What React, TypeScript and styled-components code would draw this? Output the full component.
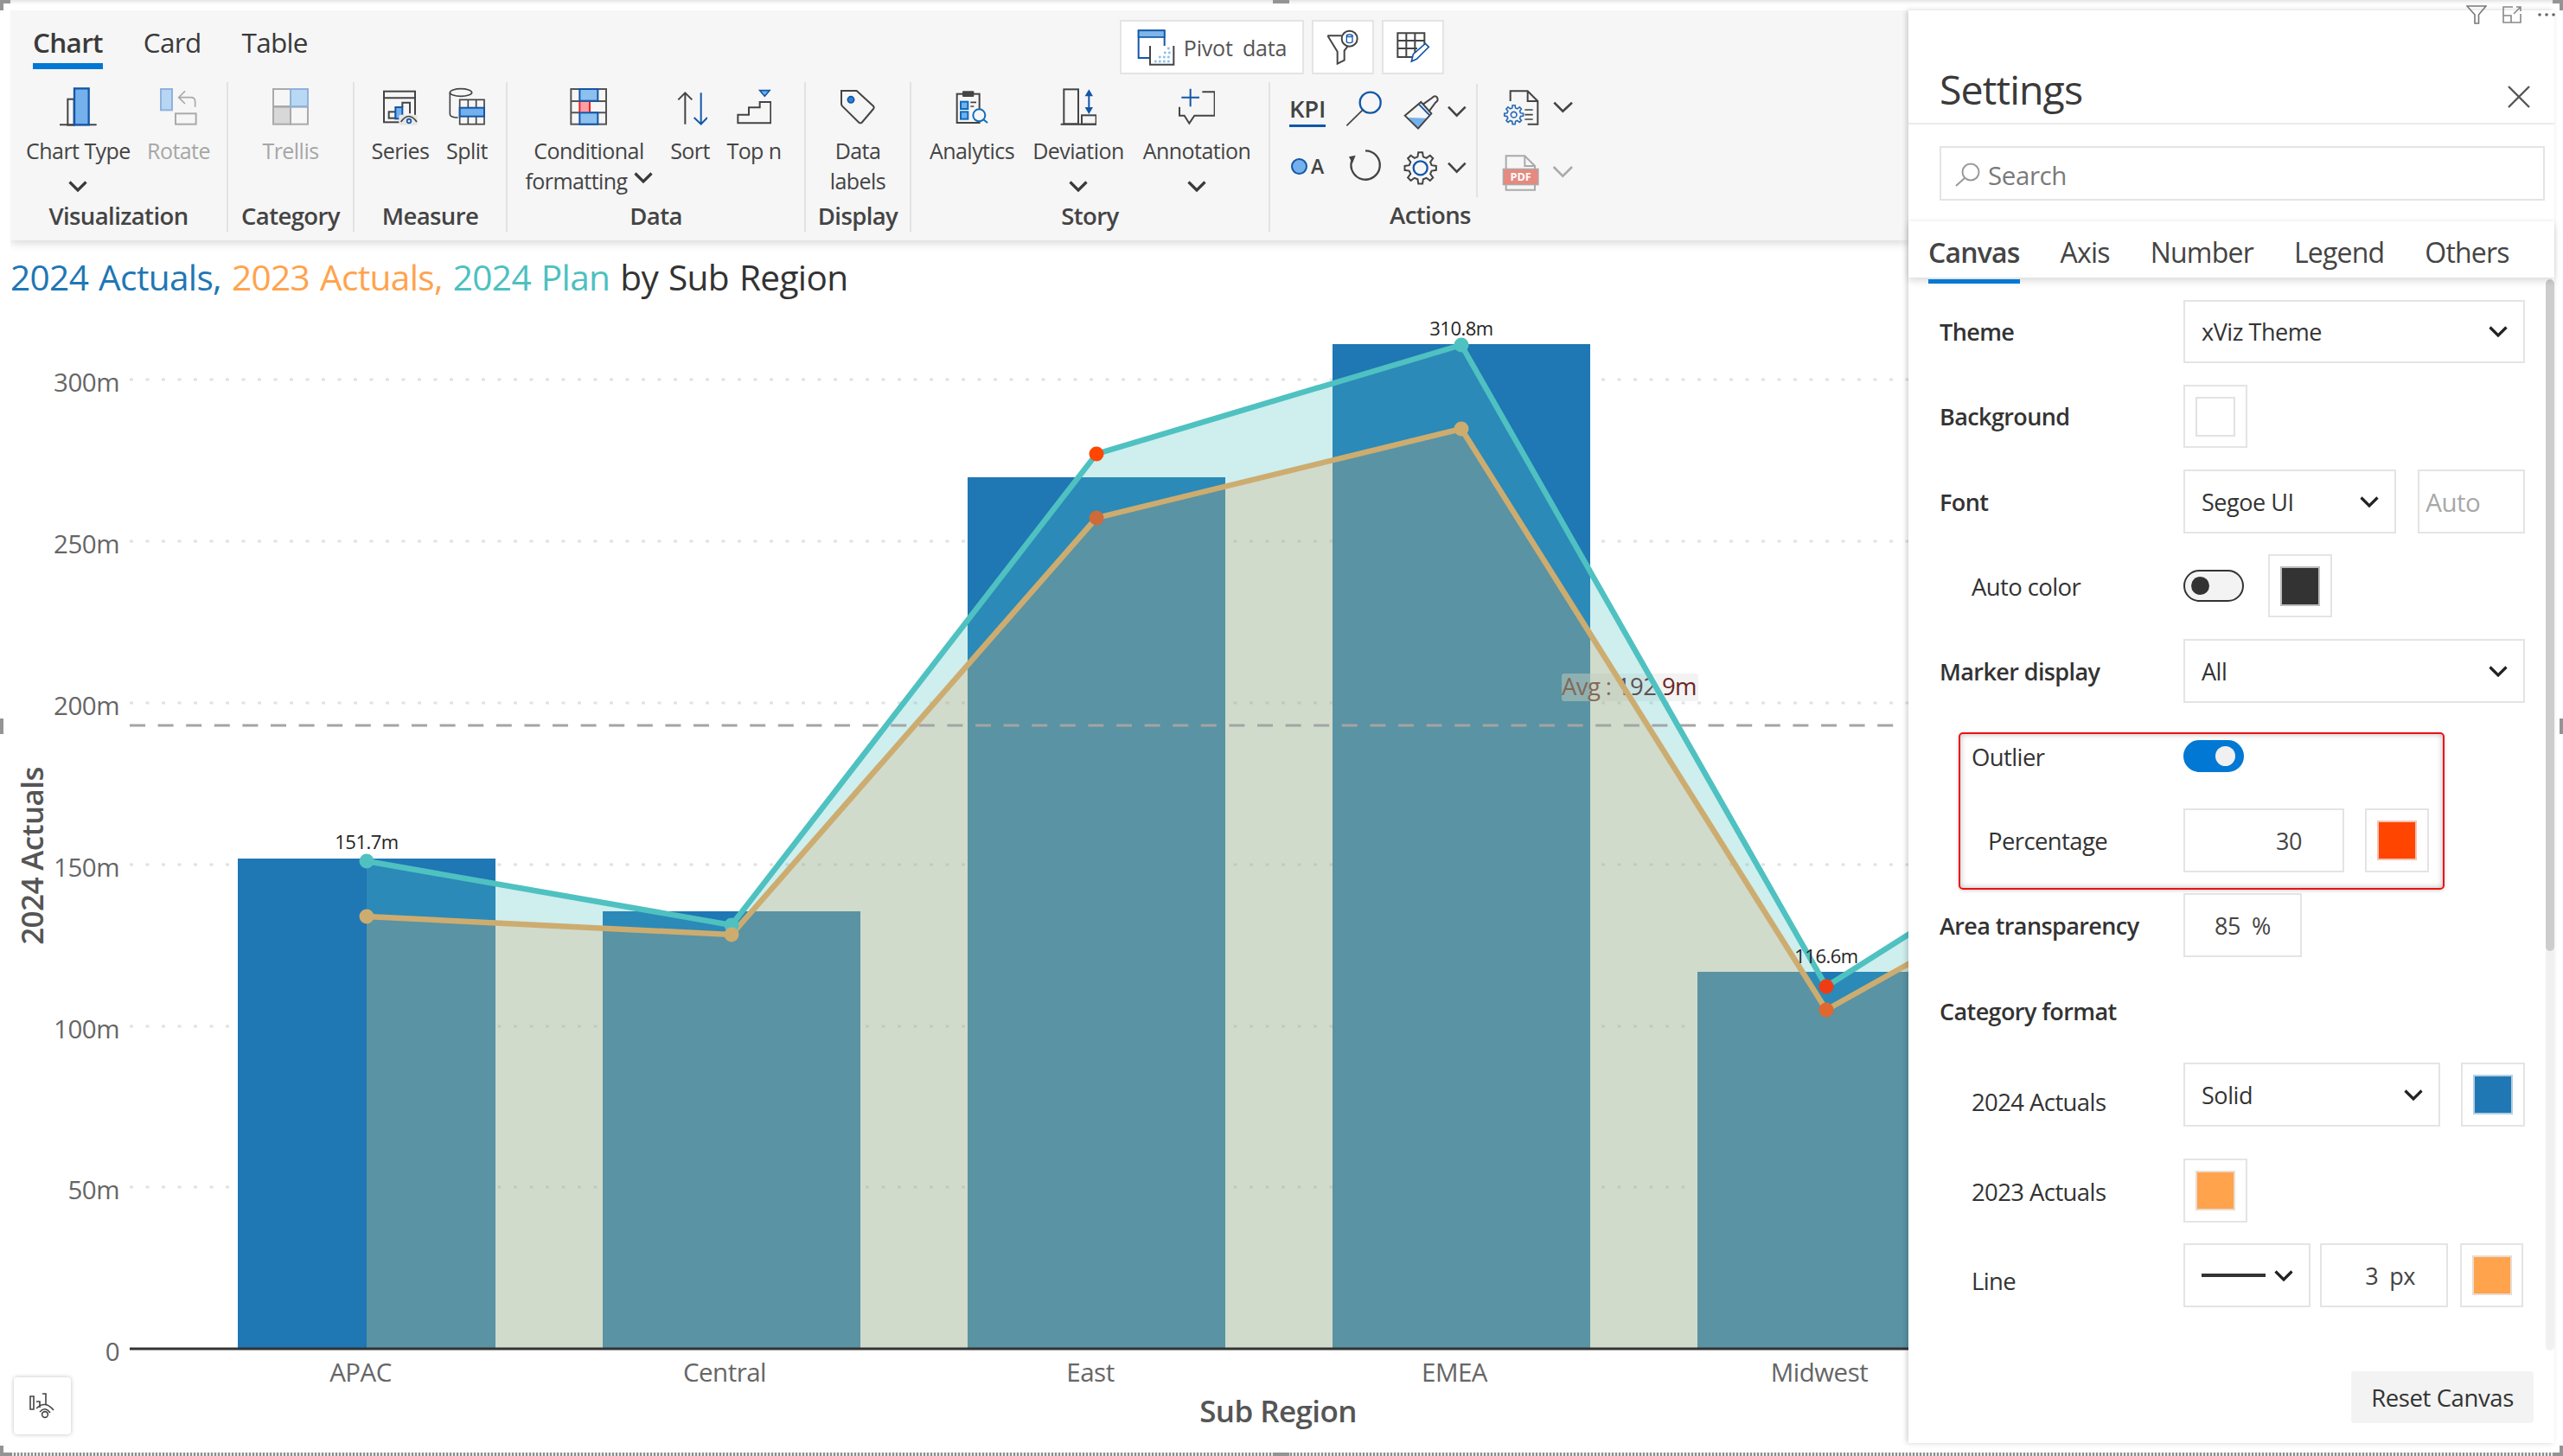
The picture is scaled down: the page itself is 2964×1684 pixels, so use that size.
import React from "react";
import styled, { createGlobalStyle } from "styled-components";

const D = "#444";
const B = "#1257a8";
const F = "#74b0ec";
const FONT = `"Open Sans", "Noto Sans", sans-serif`;

const Global = createGlobalStyle`
  html, body { margin: 0; padding: 0; background: #fff; }
  body { font-family: ${FONT}; color: #333; }
  #root { width: 2964px; height: 1684px; overflow: hidden; }
`;

const Page = styled.div`
  position: relative;
  width: 2964px;
  height: 1684px;
  display: flex;
  flex-direction: column;
  overflow: hidden;
  background: #fff;
  border-top: 0;
`;
const TopEdge = styled.div`
  height: 12px;
  flex: none;
  background: linear-gradient(#e4e4e4 0, #f6f6f6 3px, #fff 6px);
`;
const Frame = styled.div`
  flex: 1;
  min-height: 0;
  display: flex;
  padding: 0 10px 0 12px;
`;
const BottomDash = styled.div`
  height: 4px;
  flex: none;
  background: repeating-linear-gradient(90deg, #8e8e8e 0 2px, #e8e8e8 2px 4px);
`;
const Handle = styled.div<{ $x: number; $y: number; $w: number; $h: number }>`
  position: absolute;
  left: ${(p) => p.$x}px;
  top: ${(p) => p.$y}px;
  width: ${(p) => p.$w}px;
  height: ${(p) => p.$h}px;
  background: #949494;
`;
const Main = styled.div`
  width: 2195px;
  flex: none;
  position: relative;
  display: flex;
  flex-direction: column;
  overflow: hidden;
`;
const Ribbon = styled.div`
  height: 266px;
  flex: none;
  background: #f6f6f6;
  box-shadow: 0 3px 10px rgba(0, 0, 0, 0.16);
  display: flex;
  flex-direction: column;
  position: relative;
  margin-bottom: 12px;
`;
const RibbonTop = styled.div`
  height: 83px;
  flex: none;
  display: flex;
  align-items: flex-start;
`;
const RibbonTabs = styled.div`
  display: flex;
  gap: 47px;
  padding-left: 26px;
  width: 1283px;
  box-sizing: border-box;
`;
const RibbonTab = styled.div<{ $active?: boolean }>`
  font-size: 31.5px;
  letter-spacing: -0.7px;
  height: 68px;
  line-height: 49px;
  padding-top: 12px;
  box-sizing: border-box;
  color: #3a3a3a;
  font-weight: ${(p) => (p.$active ? 600 : 400)};
  border-bottom: ${(p) => (p.$active ? "7px solid #0078d4" : "7px solid transparent")};
`;
const PivotBar = styled.div`
  display: flex;
  gap: 9px;
  margin-top: 11px;
`;
const PivotButton = styled.div<{ $w: number }>`
  width: ${(p) => p.$w}px;
  height: 63px;
  box-sizing: border-box;
  background: #fff;
  border: 2px solid #e4e4e4;
  display: flex;
  align-items: center;
  justify-content: center;
  gap: 9px;
  font-size: 25px;
  color: #555;
  word-spacing: 5px;
  letter-spacing: -0.2px;
`;
const Groups = styled.div`
  flex: 1;
  display: flex;
  align-items: flex-start;
`;
const Group = styled.div<{ $w: number; $noSep?: boolean }>`
  width: ${(p) => p.$w}px;
  height: 173px;
  box-sizing: border-box;
  border-right: ${(p) => (p.$noSep ? "0" : "2px solid #e2e2e2")};
  display: flex;
  flex-direction: column;
  position: relative;
`;
const GroupItems = styled.div<{ $pl?: number; $center?: boolean }>`
  height: 137px;
  display: flex;
  padding-left: ${(p) => p.$pl ?? 0}px;
  justify-content: ${(p) => (p.$center ? "center" : "flex-start")};
`;
const GroupLabel = styled.div<{ $mt?: number }>`
  text-align: center;
  font-size: 27.5px;
  font-weight: 600;
  letter-spacing: -0.6px;
  color: #444;
  line-height: 36px;
  margin-top: ${(p) => p.$mt ?? 2}px;
`;
const Item = styled.div<{ $w: number; $dim?: boolean }>`
  width: ${(p) => p.$w}px;
  display: flex;
  flex-direction: column;
  align-items: center;
  color: ${(p) => (p.$dim ? "#a6a6a6" : "#444")};
  font-size: 25px;
  letter-spacing: -0.55px;
  line-height: 35px;
  text-align: center;
`;
const IconSlot = styled.div`
  height: 54px;
  display: flex;
  justify-content: center;
  margin-bottom: 8px;
`;
const ItemLabel = styled.div`
  white-space: nowrap;
  height: 35px;
  display: flex;
  align-items: center;
  gap: 7px;
`;
const ChevronRow = styled.div`
  height: 35px;
  display: flex;
  align-items: center;
  justify-content: center;
  padding-top: 11px;
  box-sizing: border-box;
`;
const InlineChev = styled.span`
  display: flex;
  margin-bottom: 8px;
`;
const ActionsBody = styled.div`
  height: 130px;
  margin-top: -1px;
  padding-left: 10px;
  display: grid;
  grid-template-columns: 66px 66px 60px 28px 17px 80px 24px;
  grid-template-rows: 64px 66px;
`;
const Cell = styled.div`
  display: flex;
  align-items: center;
  justify-content: center;
`;
const InnerSep = styled.div`
  grid-row: 1 / span 2;
  grid-column: 5;
  margin-top: 3px;
  width: 2px;
  height: 131px;
  background: #e2e2e2;
  justify-self: center;
`;
const Kpi = styled.div`
  font-size: 27.5px;
  font-weight: 600;
  color: #444;
  line-height: 30px;
  letter-spacing: -0.2px;
  padding-bottom: 3px;
  border-bottom: 3px solid ${B};
  margin-top: 6px;
  width: 42px;
  display: flex;
  justify-content: center;
`;
const DotA = styled.div`
  display: flex;
  align-items: center;
  gap: 4px;
  font-size: 23px;
  font-weight: 600;
  color: #444;
  margin-top: 2px;
  &::before {
    content: "";
    width: 15px;
    height: 15px;
    border-radius: 50%;
    background: ${F};
    border: 2px solid ${B};
  }
`;
const Title = styled.div`
  height: 50px;
  flex: none;
  font-size: 40.6px;
  line-height: 62px;
  letter-spacing: -0.65px;
  word-spacing: 2px;
  white-space: nowrap;
  color: #333;
`;
const TitleSpan = styled.span<{ $c: string }>`
  color: ${(p) => p.$c};
`;
const ChartSvg = styled.svg`
  flex: none;
  display: block;
  font-family: ${FONT};
`;
const FloatButton = styled.div`
  position: absolute;
  left: 4px;
  top: 1581px;
  width: 66px;
  height: 66px;
  background: #fff;
  border-radius: 4px;
  box-shadow: 0 0 5px rgba(0, 0, 0, 0.25);
  display: flex;
  align-items: center;
  justify-content: center;
`;

const Panel = styled.div`
  width: 747px;
  flex: none;
  height: 1657px;
  background: #fff;
  display: flex;
  flex-direction: column;
  box-shadow: -2px 0 6px rgba(0, 0, 0, 0.18);
  position: relative;
`;
const PanelHeader = styled.div`
  height: 132px;
  box-sizing: border-box;
  flex: none;
  border-bottom: 2px solid #ececec;
  display: flex;
  align-items: flex-start;
  justify-content: space-between;
  padding: 64px 28px 0 36px;
`;
const PanelTitle = styled.div`
  font-size: 46.5px;
  line-height: 54px;
  letter-spacing: -0.9px;
  color: #3a3a3a;
`;
const CloseIcon = styled.svg`
  margin-top: 23px;
`;
const SearchWrap = styled.div`
  height: 112px;
  flex: none;
  padding: 25px 11px 0 36px;
  box-sizing: border-box;
`;
const SearchBox = styled.div`
  height: 63px;
  box-sizing: border-box;
  border: 2px solid #e4e4e4;
  display: flex;
  align-items: center;
  padding: 3px 0 0 15px;
  gap: 9px;
  font-size: 29.5px;
  letter-spacing: -0.4px;
  color: #7a7a7a;
`;
const PanelTabs = styled.div`
  height: 65px;
  flex: none;
  display: flex;
  gap: 47px;
  padding-left: 23px;
  position: relative;
  z-index: 2;
  background: #fff;
  box-shadow: 0 4px 8px rgba(0, 0, 0, 0.14), 0 -2px 3px rgba(0, 0, 0, 0.03);
`;
const PanelTab = styled.div<{ $active?: boolean }>`
  position: relative;
  font-size: 32px;
  letter-spacing: -0.8px;
  line-height: 72px;
  color: #444;
  font-weight: ${(p) => (p.$active ? 600 : 400)};
  &::after {
    content: "";
    display: ${(p) => (p.$active ? "block" : "none")};
    position: absolute;
    left: 0;
    right: 0;
    bottom: -7px;
    height: 5px;
    background: #0078d4;
  }
`;
const PanelBody = styled.div`
  height: 1241px;
  flex: none;
  display: flex;
  justify-content: space-between;
`;
const Form = styled.div`
  padding: 26px 0 0 36px;
  flex: 1;
`;
const Scrollbar = styled.div`
  width: 10px;
  flex: none;
  margin-top: 2px;
  background: #f1f1f1;
  border-radius: 5px;
  overflow: hidden;
`;
const ScrollThumb = styled.div`
  height: 777px;
  background: #cdcdcd;
  border-radius: 5px;
`;
const Row = styled.div<{ $mt?: number; $h?: number }>`
  display: grid;
  grid-template-columns: 282px auto;
  align-items: center;
  height: ${(p) => p.$h ?? 73}px;
  margin-top: ${(p) => p.$mt ?? 0}px;
`;
const Label = styled.div<{ $bold?: boolean; $indent?: number; $dy?: number }>`
  font-size: ${(p) => (p.$bold ? 27 : 27.5)}px;
  font-weight: ${(p) => (p.$bold ? 600 : 400)};
  letter-spacing: -0.6px;
  color: #333;
  padding-left: ${(p) => p.$indent ?? 0}px;
  padding-top: ${(p) => (p.$dy ?? 0) * 2}px;
  white-space: nowrap;
`;
const Controls = styled.div<{ $gap?: number }>`
  display: flex;
  align-items: center;
  gap: ${(p) => p.$gap ?? 25}px;
`;
const Field = styled.div<{ $w: number; $h?: number; $ml?: number }>`
  width: ${(p) => p.$w}px;
  height: ${(p) => p.$h ?? 73}px;
  margin-left: ${(p) => p.$ml ?? 0}px;
  box-sizing: border-box;
  border: 2px solid #e4e4e4;
  background: #fff;
  font-size: 27px;
  letter-spacing: -0.45px;
  color: #333;
`;
const SelectField = styled(Field)`
  display: flex;
  align-items: center;
  justify-content: space-between;
  padding: 0 18px 0 19px;
`;
const InputField = styled(Field)<{ $align?: string; $pr?: number; $muted?: boolean }>`
  display: flex;
  align-items: center;
  justify-content: ${(p) => p.$align ?? "center"};
  padding-right: ${(p) => p.$pr ?? 0}px;
  white-space: pre;
  color: ${(p) => (p.$muted ? "#a8a8a8" : "#444")};
  font-size: ${(p) => (p.$muted ? 29.5 : 27)}px;
`;
const SwatchBox = styled(Field)`
  display: flex;
  align-items: center;
  justify-content: center;
`;
const SwatchFill = styled.div<{ $c: string; $b: string }>`
  width: 46px;
  height: 46px;
  box-sizing: border-box;
  background: ${(p) => p.$c};
  border: 2px solid ${(p) => p.$b};
`;
const Toggle = styled.div<{ $on?: boolean }>`
  position: relative;
  width: 70px;
  height: 37px;
  box-sizing: border-box;
  border-radius: 19px;
  background: ${(p) => (p.$on ? "#0078d4" : "#f3f3f3")};
  border: 2px solid ${(p) => (p.$on ? "#0078d4" : "#333")};
  &::after {
    content: "";
    position: absolute;
    top: ${(p) => (p.$on ? "5px" : "6px")};
    left: ${(p) => (p.$on ? "35px" : "7px")};
    width: ${(p) => (p.$on ? "23px" : "21px")};
    height: ${(p) => (p.$on ? "23px" : "21px")};
    border-radius: 50%;
    background: ${(p) => (p.$on ? "#f0f0f0" : "#333")};
  }
`;
const HighlightBox = styled.div`
  margin: 34px 0 0 22px;
  width: 562px;
  height: 182px;
  box-sizing: border-box;
  border: 2px solid #f01010;
  border-radius: 5px;
  padding: 6px 0 0 13px;
  box-shadow: inset 0 0 7px rgba(0, 0, 0, 0.28), 0 1px 4px rgba(0, 0, 0, 0.18);
`;
const HighlightRow = styled.div<{ $mt?: number; $h: number }>`
  display: grid;
  grid-template-columns: 245px auto;
  align-items: center;
  height: ${(p) => p.$h}px;
  margin-top: ${(p) => p.$mt ?? 0}px;
`;
const LineSample = styled.div`
  width: 74px;
  height: 4px;
  background: #333;
`;
const PanelFooter = styled.div`
  flex: 1;
  display: flex;
  justify-content: flex-end;
  padding: 24px 24px 0 0;
`;
const ResetButton = styled.div`
  width: 211px;
  height: 60px;
  background: #f3f3f3;
  border-radius: 4px;
  display: flex;
  align-items: center;
  justify-content: center;
  font-size: 27.5px;
  letter-spacing: -0.4px;
  color: #333;
`;
const VisualHeader = styled.div`
  position: absolute;
  top: 6px;
  right: 8px;
  display: flex;
  align-items: center;
  gap: 18px;
  z-index: 3;
`;

/* icon drawn in the coordinates of a 3x crop */
const Ico = ({
  x,
  w,
  y = 9,
  h = 162,
  children,
}: {
  x: number;
  w: number;
  y?: number;
  h?: number;
  children: React.ReactNode;
}) => (
  <svg width={w / 3} height={h / 3} viewBox={`${x} ${y} ${w} ${h}`} fill="none">
    {children}
  </svg>
);

const Chevron = ({ c = "#3a3a3a" }: { c?: string }) => (
  <svg width="22" height="13" viewBox="0 0 22 13" fill="none">
    <path d="M1.5 1.5 L11 11 L20.5 1.5" stroke={c} strokeWidth="3.2" />
  </svg>
);

const gearPath = (cx: number, cy: number, ro: number, ri: number, n: number) => {
  const pts: string[] = [];
  for (let i = 0; i < n; i++) {
    const a = (i / n) * Math.PI * 2;
    const s = Math.PI / n;
    const at = (r: number, t: number) =>
      `${(cx + r * Math.cos(t)).toFixed(1)} ${(cy + r * Math.sin(t)).toFixed(1)}`;
    pts.push(at(ri, a - s * 0.62), at(ro, a - s * 0.34), at(ro, a + s * 0.34), at(ri, a + s * 0.62));
  }
  return "M" + pts.join(" L") + " Z";
};

const bars = [
  { x: 275, top: 993 },
  { x: 697, top: 1054 },
  { x: 1119, top: 552 },
  { x: 1541, top: 398 },
  { x: 1963, top: 1124 },
];
const xs = [424, 846, 1268, 1690, 2112, 2534];
const teal = [996, 1070, 525, 399, 1141, 874];
const tan = [1060, 1081, 599, 496, 1168, 932];
const gridY = [439, 626, 813, 1000, 1187, 1373];
const ticks = [
  ["300m", 439],
  ["250m", 626],
  ["200m", 813],
  ["150m", 1000],
  ["100m", 1187],
  ["50m", 1373],
  ["0", 1560],
] as const;
const cats = [
  ["APAC", 417],
  ["Central", 838],
  ["East", 1261],
  ["EMEA", 1682],
  ["Midwest", 2104],
] as const;
const pts = (ys: number[]) => xs.map((x, i) => `${x},${ys[i]}`).join(" ");
const area = (ys: number[]) => `424,1560 ${pts(ys)} 2534,1560`;

const Chart = () => (
  <ChartSvg width="2195" height="1340" viewBox="12 340 2195 1340">
    {gridY.map((y) => (
      <line key={y} x1="150" x2="2207" y1={y} y2={y} stroke="#e2e2e2" strokeWidth="3" strokeDasharray="4 14.5" />
    ))}
    {bars.map((b) => (
      <rect key={b.x} x={b.x} y={b.top} width="298" height={1560 - b.top} fill="#1f77b4" />
    ))}
    <rect x="1806" y="779" width="158" height="32" rx="3" fill="rgba(232,232,232,0.5)" />
    <text x="1806" y="804" fontSize="27.5" letterSpacing="-0.6" fill="#6b2626">
      Avg : 192.9m
    </text>
    <polygon points={area(teal)} fill="rgba(77,192,192,0.27)" />
    <polygon points={area(tan)} fill="rgba(211,171,112,0.283)" />
    <line x1="150" x2="2196" y1="839" y2="839" stroke="#a4a4a4" strokeWidth="3" strokeDasharray="18 14.6" />
    <polyline points={pts(teal)} fill="none" stroke="#4fc1c1" strokeWidth="6.5" />
    <polyline points={pts(tan)} fill="none" stroke="#cdac70" strokeWidth="6.5" />
    {xs.slice(0, 5).map((x, i) => (
      <circle key={x} cx={x} cy={teal[i]} r="8.5" fill={i === 2 ? "#ff4500" : i === 4 ? "#f03c14" : "#4fc1c1"} />
    ))}
    {xs.slice(0, 5).map((x, i) => (
      <circle key={x} cx={x} cy={tan[i]} r="8.5" fill={i === 2 ? "#cd6b3a" : i === 4 ? "#e0672d" : "#cdac70"} />
    ))}
    <line x1="150" x2="2207" y1="1560" y2="1560" stroke="#333" strokeWidth="3" />
    {ticks.map(([t, y]) => (
      <text key={t} x="138" y={y + 14} textAnchor="end" fontSize="29.5" letterSpacing="-0.5" fill="#666">
        {t}
      </text>
    ))}
    {cats.map(([t, x]) => (
      <text key={t} x={x} y="1598" textAnchor="middle" fontSize="29.5" letterSpacing="-0.5" fill="#666">
        {t}
      </text>
    ))}
    <text x="1478" y="1645" textAnchor="middle" fontSize="35" fontWeight="600" letterSpacing="-0.6" fill="#555">
      Sub Region
    </text>
    <text
      transform="translate(50 990) rotate(-90)"
      textAnchor="middle"
      fontSize="35"
      fontWeight="600"
      letterSpacing="-0.6"
      fill="#555"
    >
      2024 Actuals
    </text>
    {(
      [
        ["151.7m", 424, 982],
        ["310.8m", 1690, 388],
        ["116.6m", 2112, 1114],
      ] as const
    ).map(([t, x, y]) => (
      <text key={t} x={x} y={y} textAnchor="middle" fontSize="22" letterSpacing="-0.5" fill="#252423">
        {t}
      </text>
    ))}
  </ChartSvg>
);

const RibbonGroups = () => (
  <Groups>
    <Group $w={252}>
      <GroupItems $pl={18}>
        <Item $w={122}>
          <IconSlot>
            <Ico x={148} w={128}>
              <path d="M148 157 H276" stroke={D} strokeWidth="6" />
              <rect x="176" y="68" width="22" height="90" stroke={D} strokeWidth="6" />
              <rect x="199" y="31" width="50" height="126" fill={F} stroke={B} strokeWidth="7" />
            </Ico>
          </IconSlot>
          <ItemLabel>Chart Type</ItemLabel>
          <ChevronRow>
            <Chevron />
          </ChevronRow>
        </Item>
        <Item $w={112} $dim>
          <IconSlot>
            <Ico x={498} w={130}>
              <rect x="501" y="33" width="39" height="73" fill="#b7d6f3" stroke="#8fb2dc" strokeWidth="6" />
              <path d="M585 40 L563 62 L585 84 M565 62 H605 Q620 62 620 77 V95" stroke="#aaa" strokeWidth="5" />
              <rect x="552" y="118" width="71" height="37" stroke="#aaa" strokeWidth="6" />
            </Ico>
          </IconSlot>
          <ItemLabel>Rotate</ItemLabel>
        </Item>
      </GroupItems>
      <GroupLabel>Visualization</GroupLabel>
    </Group>
    <Group $w={146}>
      <GroupItems $center>
        <Item $w={110} $dim>
          <IconSlot>
            <Ico x={887} w={127}>
              <rect x="890" y="33" width="60" height="60" stroke="#aaa" strokeWidth="6" />
              <rect x="890" y="95" width="60" height="60" fill="#d8d8d8" stroke="#aaa" strokeWidth="6" />
              <rect x="950" y="95" width="60" height="60" stroke="#aaa" strokeWidth="6" />
              <rect x="950" y="33" width="60" height="60" fill="#b9d8f3" stroke="#8fb2dc" strokeWidth="6" />
            </Ico>
          </IconSlot>
          <ItemLabel>Trellis</ItemLabel>
        </Item>
      </GroupItems>
      <GroupLabel>Category</GroupLabel>
    </Group>
    <Group $w={177}>
      <GroupItems $pl={11}>
        <Item $w={84}>
          <IconSlot>
            <Ico x={1273} w={120}>
              <rect x="1276" y="41" width="108" height="107" stroke={D} strokeWidth="6" />
              <path d="M1276 64 H1384" stroke={D} strokeWidth="6" />
              <rect x="1293" y="112" width="24" height="22" stroke={D} strokeWidth="6" />
              <path d="M1340 96 V80 H1366 V118" stroke={D} strokeWidth="6" />
              <rect x="1316" y="96" width="24" height="40" fill={F} stroke={B} strokeWidth="6" />
              <rect x="1328" y="122" width="64" height="36" rx="6" fill="#e6e6e6" />
              <path d="M1335 147 Q1362 108 1390 147" stroke={D} strokeWidth="5" />
              <circle cx="1363" cy="144" r="7" stroke={B} strokeWidth="5" />
            </Ico>
          </IconSlot>
          <ItemLabel>Series</ItemLabel>
        </Item>
        <Item $w={70}>
          <IconSlot>
            <Ico x={1498} w={126}>
              <ellipse cx="1540" cy="45" rx="38" ry="13" stroke={D} strokeWidth="5" />
              <path d="M1502 45 V120 Q1502 132 1530 132" stroke={D} strokeWidth="5" />
              <rect x="1536" y="70" width="85" height="85" fill="#f6f6f6" stroke={D} strokeWidth="5" />
              <path d="M1565 70 V155 M1593 70 V155" stroke={D} strokeWidth="5" />
              <rect x="1536" y="98" width="85" height="30" fill={F} stroke={B} strokeWidth="6" />
            </Ico>
          </IconSlot>
          <ItemLabel>Split</ItemLabel>
        </Item>
      </GroupItems>
      <GroupLabel>Measure</GroupLabel>
    </Group>
    <Group $w={345}>
      <GroupItems $pl={12}>
        <Item $w={164}>
          <IconSlot>
            <Ico x={58} w={130}>
              <rect x="62" y="33" width="122" height="122" stroke="#555" strokeWidth="6" />
              <path d="M62 75 H184 M62 115 H184" stroke="#555" strokeWidth="6" />
              <rect x="92" y="77" width="37" height="37" fill="#ff9ea5" />
              <path d="M92 77 V113 M127 77 V113" stroke="#e22" strokeWidth="6" />
              <rect x="92" y="33" width="63" height="41" fill="#8cc0ee" stroke={B} strokeWidth="6" />
              <rect x="92" y="115" width="63" height="40" fill="#8cc0ee" stroke={B} strokeWidth="6" />
            </Ico>
          </IconSlot>
          <ItemLabel>Conditional</ItemLabel>
          <ItemLabel>
            formatting
            <InlineChev>
              <Chevron />
            </InlineChev>
          </ItemLabel>
        </Item>
        <Item $w={70}>
          <IconSlot>
            <Ico x={414} w={120}>
              <path d="M457 155 V46 M433 70 L457 46 L481 70" stroke={D} strokeWidth="6" />
              <path d="M512 46 V155 M488 132 L512 155 L534 132" stroke={B} strokeWidth="6" />
            </Ico>
          </IconSlot>
          <ItemLabel>Sort</ItemLabel>
        </Item>
        <Item $w={78}>
          <IconSlot>
            <Ico x={638} w={122}>
              <path d="M642 122 H680 V97 H718 V78 H756 V151 H642 Z" stroke={D} strokeWidth="6" />
              <path d="M718 38 H752 L735 58 Z" fill={F} stroke={B} strokeWidth="5" />
            </Ico>
          </IconSlot>
          <ItemLabel>Top n</ItemLabel>
        </Item>
      </GroupItems>
      <GroupLabel>Data</GroupLabel>
    </Group>
    <Group $w={122}>
      <GroupItems $center>
        <Item $w={100}>
          <IconSlot>
            <Ico x={1002} w={120}>
              <path
                d="M1005 39 H1058 L1116 92 Q1120 97 1116 102 L1076 149 Q1071 153 1066 149 L1008 92 Q1005 88 1005 84 Z"
                stroke={D}
                strokeWidth="6"
              />
              <circle cx="1038" cy="70" r="11" fill="#2f7fd0" stroke={B} strokeWidth="5" />
            </Ico>
          </IconSlot>
          <ItemLabel>Data</ItemLabel>
          <ItemLabel>labels</ItemLabel>
        </Item>
      </GroupItems>
      <GroupLabel>Display</GroupLabel>
    </Group>
    <Group $w={415}>
      <GroupItems $pl={15}>
        <Item $w={110}>
          <IconSlot>
            <Ico x={76} w={114}>
              <rect x="81" y="50" width="78" height="100" stroke={D} strokeWidth="6" />
              <rect x="100" y="40" width="40" height="20" rx="3" fill={D} />
              <rect x="94" y="77" width="25" height="25" fill={F} stroke="#0f6cbd" strokeWidth="6" />
              <rect x="94" y="112" width="25" height="25" fill={F} stroke="#0f6cbd" strokeWidth="6" />
              <path d="M128 79 H148 M128 93 H140" stroke={D} strokeWidth="5" />
              <circle cx="158" cy="124" r="21" fill="#f6f6f6" stroke="#0f6cbd" strokeWidth="6" />
              <path d="M173 139 L187 150" stroke="#0f6cbd" strokeWidth="6" />
            </Ico>
          </IconSlot>
          <ItemLabel>Analytics</ItemLabel>
        </Item>
        <Item $w={136}>
          <IconSlot>
            <Ico x={434} w={128}>
              <rect x="447" y="34" width="50" height="120" stroke={D} strokeWidth="6" />
              <path d="M436 155 H560" stroke={D} strokeWidth="6" />
              <rect x="509" y="124" width="50" height="31" stroke={D} strokeWidth="6" />
              <path d="M534 45 V108" stroke={B} strokeWidth="6" />
              <path d="M520 58 L534 34 L548 58 Z M520 96 L534 120 L548 96 Z" fill={B} />
            </Ico>
          </IconSlot>
          <ItemLabel>Deviation</ItemLabel>
          <ChevronRow>
            <Chevron />
          </ChevronRow>
        </Item>
        <Item $w={138}>
          <IconSlot>
            <Ico x={850} w={128}>
              <path d="M860 62 H922 M891 32 V94" stroke={B} strokeWidth="6" />
              <path d="M932 43 H975 V125 H905 L887 152 L870 125 H853 V95" stroke={D} strokeWidth="6" />
            </Ico>
          </IconSlot>
          <ItemLabel>Annotation</ItemLabel>
          <ChevronRow>
            <Chevron />
          </ChevronRow>
        </Item>
      </GroupItems>
      <GroupLabel>Story</GroupLabel>
    </Group>
    <Group $w={370} $noSep>
      <ActionsBody>
        <Cell>
          <Kpi>KPI</Kpi>
        </Cell>
        <Cell>
          <Ico x={195} w={198} y={6} h={192}>
            <circle cx="314" cy="80" r="36" stroke={B} strokeWidth="7" />
            <path d="M287 106 L232 160" stroke={D} strokeWidth="5" />
          </Ico>
        </Cell>
        <Cell>
          <Ico x={393} w={180} y={6} h={192}>
            <path d="M446 132 L512 134 L480 168 Z" fill={F} />
            <path d="M434 125 L490 78 L526 118 L480 170 Z" stroke={D} strokeWidth="6" />
            <path d="M482 85 L520 124" stroke={B} strokeWidth="6" />
            <path d="M497 86 L528 64 Q538 52 546 62 Q552 72 540 80 L518 110" stroke={D} strokeWidth="6" />
          </Ico>
        </Cell>
        <Cell>
          <Ico x={573} w={84} y={6} h={192}>
            <path d="M585 95 L614 125 L644 95" stroke={D} strokeWidth="8" />
          </Ico>
        </Cell>
        <InnerSep />
        <Cell>
          <Ico x={708} w={240} y={6} h={192}>
            <path d="M800 75 V40 H860 L895 75 V155 H860 M860 40 V75 H895" stroke={D} strokeWidth="6" />
            <path d="M850 105 H878 M850 122 H878 M850 138 H878" stroke={D} strokeWidth="5" />
            <path d={gearPath(812, 122, 33, 24, 8)} fill="#f6f6f6" stroke="#2a6bb8" strokeWidth="5" />
            <circle cx="812" cy="122" r="10" stroke="#2a6bb8" strokeWidth="5" />
          </Ico>
        </Cell>
        <Cell>
          <Ico x={948} w={72} y={6} h={192}>
            <path d="M952 80 L982 110 L1014 80" stroke={D} strokeWidth="8" />
          </Ico>
        </Cell>
        <Cell>
          <DotA>A</DotA>
        </Cell>
        <Cell>
          <Ico x={195} w={198} y={198} h={198}>
            <path d="M297 247 A50 50 0 1 1 250 281" stroke={D} strokeWidth="7" />
            <path d="M263 263 L240 268 L252 291 Z" fill={D} />
          </Ico>
        </Cell>
        <Cell>
          <Ico x={393} w={180} y={198} h={198}>
            <path d={gearPath(488, 307, 55, 40, 8)} stroke={D} strokeWidth="6" />
            <circle cx="488" cy="307" r="24" stroke={B} strokeWidth="7" />
          </Ico>
        </Cell>
        <Cell>
          <Ico x={573} w={84} y={198} h={198}>
            <path d="M585 290 L614 320 L644 290" stroke={D} strokeWidth="8" />
          </Ico>
        </Cell>
        <Cell>
          <Ico x={708} w={240} y={198} h={198}>
            <path d="M785 310 V265 H850 L885 300 V310 M850 265 V300 H885 M785 365 V383 H885 V365" stroke="#aaa" strokeWidth="6" />
            <rect x="775" y="310" width="122" height="55" fill="#e58a80" stroke="#aaa" strokeWidth="4" />
            <text x="836" y="352" textAnchor="middle" fontSize="38" fontWeight="700" fill="#fff" fontFamily={FONT}>
              PDF
            </text>
          </Ico>
        </Cell>
        <Cell>
          <Ico x={948} w={72} y={198} h={198}>
            <path d="M950 303 L982 335 L1014 303" stroke="#aaa" strokeWidth="8" />
          </Ico>
        </Cell>
      </ActionsBody>
      <GroupLabel $mt={7}>Actions</GroupLabel>
    </Group>
  </Groups>
);

const pivotDots = [
  [115, 145],
  [130, 145],
  [145, 145],
  [160, 145],
  [130, 130],
  [145, 130],
  [160, 130],
  [148, 115],
  [163, 115],
  [160, 100],
];

const TopRow = () => (
  <RibbonTop>
    <RibbonTabs>
      <RibbonTab $active>Chart</RibbonTab>
      <RibbonTab>Card</RibbonTab>
      <RibbonTab>Table</RibbonTab>
    </RibbonTabs>
    <PivotBar>
      <PivotButton $w={213}>
        <Ico x={55} w={135} y={35} h={130}>
          <rect x="60" y="42" width="90" height="95" stroke={B} strokeWidth="6" />
          <rect x="60" y="42" width="90" height="23" fill="#7fb6ea" stroke={B} strokeWidth="5" />
          <path d="M100 95 V160 H182 V95 Z" fill="#fff" />
          <path d="M100 95 V160 H182 V95" stroke={D} strokeWidth="6" />
          {pivotDots.map(([x, y]) => (
            <rect key={`${x}-${y}`} x={x} y={y} width="8" height="8" fill="#8fc2ee" />
          ))}
        </Ico>
        <span>Pivot data</span>
      </PivotButton>
      <PivotButton $w={72}>
        <Ico x={735} w={120} y={35} h={130}>
          <path d="M742 60 H790 M742 60 L776 115 V157 L800 145 V112 L812 96" stroke={D} strokeWidth="6" />
          <circle cx="818" cy="70" r="27" fill="#fff" stroke={D} strokeWidth="6" />
          <path d="M808 60 V82 Q818 88 828 82 V60" stroke={B} strokeWidth="4" />
          <ellipse cx="818" cy="60" rx="10" ry="4" stroke={B} strokeWidth="4" />
        </Ico>
      </PivotButton>
      <PivotButton $w={72}>
        <Ico x={975} w={120} y={45} h={110}>
          <path d="M1040 135 H982 V52 H1075 V90" stroke={D} strokeWidth="6" />
          <path d="M982 78 H1075 M982 105 H1050 M1012 52 V135 M1042 52 V122" stroke={D} strokeWidth="6" />
          <path d="M1030 150 L1036 125 L1078 88 L1090 100 L1048 142 Z" fill="#fff" stroke={B} strokeWidth="5" />
        </Ico>
      </PivotButton>
    </PivotBar>
  </RibbonTop>
);

const Settings = () => (
  <Panel>
    <PanelHeader>
      <PanelTitle>Settings</PanelTitle>
      <CloseIcon width="26" height="26" viewBox="0 0 26 26" fill="none">
        <path d="M1 1 L25 25 M25 1 L1 25" stroke="#555" strokeWidth="2.4" />
      </CloseIcon>
    </PanelHeader>
    <SearchWrap>
      <SearchBox>
        <svg width="30" height="28" viewBox="0 0 30 28" fill="none">
          <circle cx="19" cy="11" r="9.5" stroke="#999" strokeWidth="2" />
          <path d="M12 18 L2 27" stroke="#999" strokeWidth="2" />
        </svg>
        Search
      </SearchBox>
    </SearchWrap>
    <PanelTabs>
      <PanelTab $active>Canvas</PanelTab>
      <PanelTab>Axis</PanelTab>
      <PanelTab>Number</PanelTab>
      <PanelTab>Legend</PanelTab>
      <PanelTab>Others</PanelTab>
    </PanelTabs>
    <PanelBody>
      <Form>
        <Row>
          <Label $bold>Theme</Label>
          <SelectField $w={395}>
            xViz Theme
            <Chevron c="#222" />
          </SelectField>
        </Row>
        <Row $mt={25}>
          <Label $bold>Background</Label>
          <SwatchBox $w={74}>
            <SwatchFill $c="#fff" $b="#e2e2e2" />
          </SwatchBox>
        </Row>
        <Row $mt={25} $h={74}>
          <Label $bold>Font</Label>
          <Controls>
            <SelectField $w={246} $h={74}>
              Segoe UI
              <Chevron c="#222" />
            </SelectField>
            <InputField $w={124} $h={74} $align="flex-start" $muted>
              {" Auto"}
            </InputField>
          </Controls>
        </Row>
        <Row $mt={24}>
          <Label $indent={37} $dy={1}>
            Auto color
          </Label>
          <Controls $gap={28}>
            <Toggle />
            <SwatchBox $w={74}>
              <SwatchFill $c="#333" $b="#bdbdbd" />
            </SwatchBox>
          </Controls>
        </Row>
        <Row $mt={25} $h={74}>
          <Label $bold>Marker display</Label>
          <SelectField $w={395} $h={74}>
            All
            <Chevron c="#222" />
          </SelectField>
        </Row>
        <HighlightBox>
          <HighlightRow $h={38}>
            <Label $dy={1}>Outlier</Label>
            <Toggle $on />
          </HighlightRow>
          <HighlightRow $h={74} $mt={42}>
            <Label $indent={19}>Percentage</Label>
            <Controls $gap={24}>
              <InputField $w={186} $h={74} $align="flex-end" $pr={47}>
                30
              </InputField>
              <SwatchBox $w={74} $h={74}>
                <SwatchFill $c="#ff4500" $b="#f2c4b4" />
              </SwatchBox>
            </Controls>
          </HighlightRow>
        </HighlightBox>
        <Row $mt={4} $h={74}>
          <Label $bold>Area transparency</Label>
          <InputField $w={137} $h={74}>
            {"85  %"}
          </InputField>
        </Row>
        <Row $mt={26} $h={72}>
          <Label $bold>Category format</Label>
        </Row>
        <Row $mt={24} $h={74}>
          <Label $indent={37} $dy={8}>
            2024 Actuals
          </Label>
          <Controls $gap={24}>
            <SelectField $w={297} $h={74}>
              Solid
              <Chevron c="#222" />
            </SelectField>
            <SwatchBox $w={74} $h={74}>
              <SwatchFill $c="#1f77b4" $b="#b5cfe2" />
            </SwatchBox>
          </Controls>
        </Row>
        <Row $mt={37} $h={74}>
          <Label $indent={37} $dy={1}>
            2023 Actuals
          </Label>
          <SwatchBox $w={74} $h={74}>
            <SwatchFill $c="#ffa34d" $b="#eadcd0" />
          </SwatchBox>
        </Row>
        <Row $mt={24} $h={74}>
          <Label $indent={37} $dy={6}>
            Line
          </Label>
          <Controls $gap={11}>
            <SelectField $w={147} $h={74}>
              <LineSample />
              <Chevron c="#222" />
            </SelectField>
            <InputField $w={148} $h={74} $align="flex-end" $pr={36}>
              {"3  px"}
            </InputField>
            <SwatchBox $w={73} $h={74} $ml={3}>
              <SwatchFill $c="#ffa34d" $b="#eadcd0" />
            </SwatchBox>
          </Controls>
        </Row>
      </Form>
      <Scrollbar>
        <ScrollThumb />
      </Scrollbar>
    </PanelBody>
    <PanelFooter>
      <ResetButton>Reset Canvas</ResetButton>
    </PanelFooter>
  </Panel>
);

const handles = [
  [0, 0, 12, 4],
  [0, 0, 4, 12],
  [2952, 0, 12, 4],
  [2960, 0, 4, 12],
  [0, 1672, 4, 12],
  [0, 1680, 12, 4],
  [2960, 1672, 4, 12],
  [2952, 1680, 12, 4],
  [1472, 0, 19, 4],
  [1472, 1680, 19, 4],
  [0, 831, 4, 18],
  [2960, 831, 4, 18],
];

export default function App() {
  return (
    <Page>
      <Global />
      <TopEdge />
      <Frame>
        <Main>
          <Ribbon>
            <TopRow />
            <RibbonGroups />
          </Ribbon>
          <Title>
            <TitleSpan $c="#1f77b4">2024 Actuals, </TitleSpan>
            <TitleSpan $c="#ffa34d">2023 Actuals, </TitleSpan>
            <TitleSpan $c="#4dc0c0">2024 Plan </TitleSpan>
            by Sub Region
          </Title>
          <Chart />
          <FloatButton>
            <svg width="30" height="30" viewBox="0 0 30 30" fill="none">
              <path d="M1 4 H5 V19 H1 Z M8 10 H12 V17 M15 1 H19 V13" stroke="#444" strokeWidth="1.6" />
              <path d="M8 18 Q18 8 28 20 M12 22 Q18 15 24 23" stroke="#444" strokeWidth="1.6" />
              <circle cx="18" cy="25" r="3.4" stroke="#444" strokeWidth="1.6" />
            </svg>
          </FloatButton>
        </Main>
        <Settings />
      </Frame>
      <BottomDash />
      <VisualHeader>
        <svg width="24" height="22" viewBox="0 0 24 22" fill="none">
          <path d="M1 1 H23 L14.5 11 V21 H10 V11 Z" stroke="#777" strokeWidth="1.6" />
        </svg>
        <svg width="22" height="20" viewBox="0 0 22 20" fill="none">
          <path d="M12 1 H1 V19 H21 V9 M1 11 H10 V19 M13 9 L21 1 M16 1 H21 V6" stroke="#888" strokeWidth="1.6" />
        </svg>
        <svg width="22" height="6" viewBox="0 0 22 6" fill="none">
          <circle cx="3" cy="3" r="1.8" fill="#666" />
          <circle cx="11" cy="3" r="1.8" fill="#666" />
          <circle cx="19" cy="3" r="1.8" fill="#666" />
        </svg>
      </VisualHeader>
      {handles.map(([x, y, w, h]) => (
        <Handle key={`${x}-${y}-${w}`} $x={x} $y={y} $w={w} $h={h} />
      ))}
    </Page>
  );
}
